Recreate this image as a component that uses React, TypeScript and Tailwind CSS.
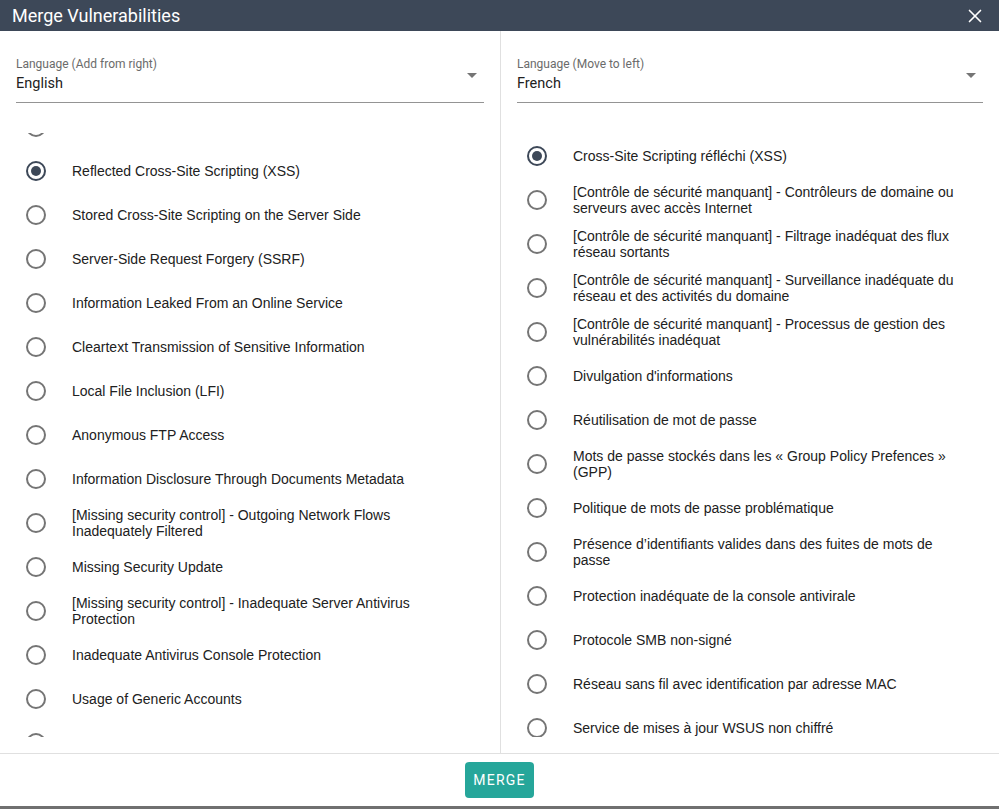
import { X } from "lucide-react";

const leftItems = [
  "",
  "Reflected Cross-Site Scripting (XSS)",
  "Stored Cross-Site Scripting on the Server Side",
  "Server-Side Request Forgery (SSRF)",
  "Information Leaked From an Online Service",
  "Cleartext Transmission of Sensitive Information",
  "Local File Inclusion (LFI)",
  "Anonymous FTP Access",
  "Information Disclosure Through Documents Metadata",
  "[Missing security control] - Outgoing Network Flows Inadequately Filtered",
  "Missing Security Update",
  "[Missing security control] - Inadequate Server Antivirus Protection",
  "Inadequate Antivirus Console Protection",
  "Usage of Generic Accounts",
  "",
];

const rightItems = [
  "Cross-Site Scripting réfléchi (XSS)",
  "[Contrôle de sécurité manquant] - Contrôleurs de domaine ou serveurs avec accès Internet",
  "[Contrôle de sécurité manquant] - Filtrage inadéquat des flux réseau sortants",
  "[Contrôle de sécurité manquant] - Surveillance inadéquate du réseau et des activités du domaine",
  "[Contrôle de sécurité manquant] - Processus de gestion des vulnérabilités inadéquat",
  "Divulgation d'informations",
  "Réutilisation de mot de passe",
  "Mots de passe stockés dans les « Group Policy Prefences » (GPP)",
  "Politique de mots de passe problématique",
  "Présence d’identifiants valides dans des fuites de mots de passe",
  "Protection inadéquate de la console antivirale",
  "Protocole SMB non-signé",
  "Réseau sans fil avec identification par adresse MAC",
  "Service de mises à jour WSUS non chiffré",
];

function Radio({ checked }: { checked: boolean }) {
  return (
    <svg width="20" height="20" viewBox="0 0 20 20" className="shrink-0">
      <circle
        cx="10"
        cy="10"
        r="9"
        fill="none"
        strokeWidth="2"
        stroke={checked ? "#3d4858" : "#757575"}
      />
      {checked && <circle cx="10" cy="10" r="5" fill="#3d4858" />}
    </svg>
  );
}

function Item({ label, checked }: { label: string; checked: boolean }) {
  return (
    <div className="flex items-center min-h-[44px] pl-[10px] pr-4">
      <Radio checked={checked} />
      <div className="ml-[26px] text-[14px] leading-4 text-[#212121] font-['Liberation_Sans',Arial,sans-serif]">
        {label}
      </div>
    </div>
  );
}

function LangSelect({ label, value }: { label: string; value: string }) {
  return (
    <div className="relative pt-[25px] pb-[8px] border-b border-[#949494] font-['Roboto',sans-serif]">
      <div className="text-[12px] leading-4 text-[#6b6b6b]">{label}</div>
      <div className="mt-[2px] text-[14.5px] leading-5 text-[#212121]">{value}</div>
      <div className="absolute right-[7px] top-[42px] w-0 h-0 border-l-[5px] border-r-[5px] border-t-[5px] border-l-transparent border-r-transparent border-t-[#757575]" />
    </div>
  );
}

export default function App() {
  return (
    <div className="w-[999px] h-[809px] bg-[#707070] overflow-hidden">
      <div className="h-[806px] bg-white flex flex-col">
        <div className="h-[31px] shrink-0 bg-[#3d4858] flex items-center justify-between pl-3 pr-[13px]">
          <span className="text-white text-[18px] leading-[31px] font-['Roboto',sans-serif]">
            Merge Vulnerabilities
          </span>
          <X className="w-[22px] h-[22px] text-white" strokeWidth={1.8} />
        </div>

        <div className="flex h-[722px]">
          <div className="w-[501px] border-r border-[#e0e0e0] px-4 pb-4 flex flex-col">
            <LangSelect label="Language (Add from right)" value="English" />
            <div className="mt-[30px] h-[604px] overflow-hidden">
              <div className="-mt-[28px]">
                {leftItems.map((t, i) => (
                  <Item key={i} label={t} checked={i === 1} />
                ))}
              </div>
            </div>
          </div>
          <div className="flex-1 px-4 pb-4 flex flex-col">
            <LangSelect label="Language (Move to left)" value="French" />
            <div className="mt-[30px] h-[604px] overflow-hidden pt-[1px]">
              {rightItems.map((t, i) => (
                <Item key={i} label={t} checked={i === 0} />
              ))}
            </div>
          </div>
        </div>

        <div className="flex-1 border-t border-[#e0e0e0] flex items-center justify-center">
          <button className="h-9 px-2 rounded bg-[#26a69a] text-white text-[14px] tracking-[1.25px] font-['Roboto',sans-serif]">
            MERGE
          </button>
        </div>
      </div>
    </div>
  );
}
